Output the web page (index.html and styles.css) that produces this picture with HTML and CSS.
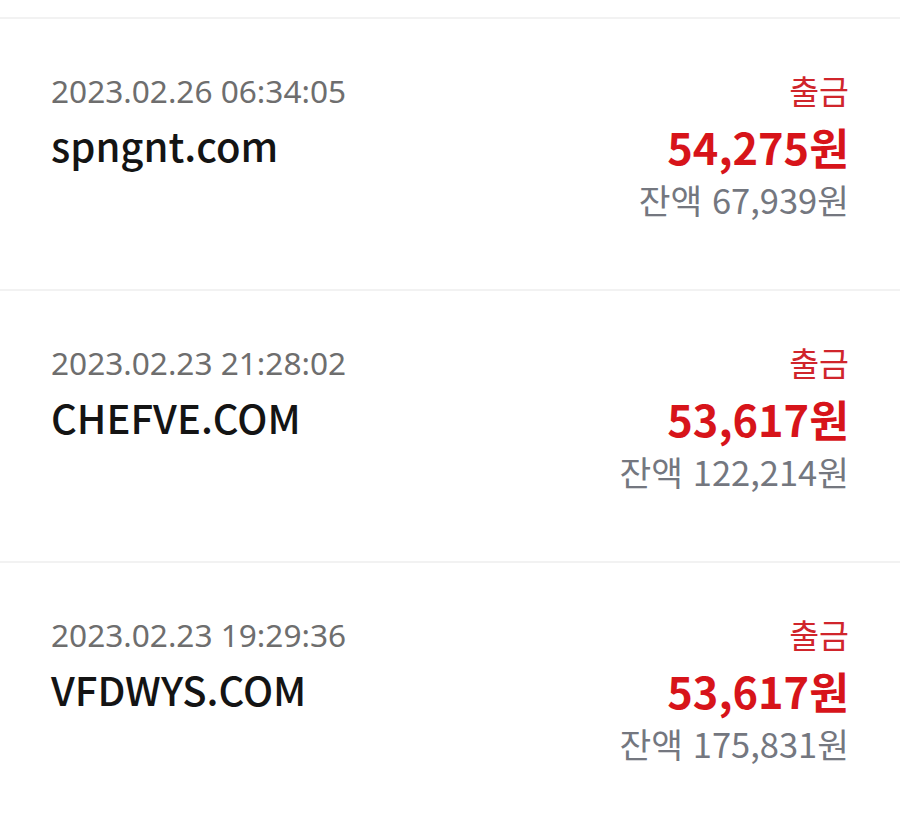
FILE: index.html
```html
<!DOCTYPE html>
<html lang="ko">

<head>
    <meta charset="UTF-8">
    <meta name="viewport" content="width=device-width, initial-scale=1.0">
    <title>거래내역</title>
    <link rel="stylesheet" href="styles.css">
</head>

<body>
    <!-- Transaction list -->
    <ul class="tx-list">
        <li class="tx-item">
            <div class="tx-info">
                <span class="tx-date">2023.02.26 06:34:05</span>
                <span class="tx-name">spngnt.com</span>
            </div>
            <div class="tx-amounts">
                <span class="tx-type">출금</span>
                <span class="tx-amount">54,275원</span>
                <span class="tx-balance">잔액 67,939원</span>
            </div>
        </li>
        <li class="tx-item">
            <div class="tx-info">
                <span class="tx-date">2023.02.23 21:28:02</span>
                <span class="tx-name">CHEFVE.COM</span>
            </div>
            <div class="tx-amounts">
                <span class="tx-type">출금</span>
                <span class="tx-amount">53,617원</span>
                <span class="tx-balance">잔액 122,214원</span>
            </div>
        </li>
        <li class="tx-item">
            <div class="tx-info">
                <span class="tx-date">2023.02.23 19:29:36</span>
                <span class="tx-name">VFDWYS.COM</span>
            </div>
            <div class="tx-amounts">
                <span class="tx-type">출금</span>
                <span class="tx-amount">53,617원</span>
                <span class="tx-balance">잔액 175,831원</span>
            </div>
        </li>
    </ul>
</body>

</html>
```

FILE: styles.css
```css
/* Base styling */
body {
    font-family: 'Noto Sans CJK KR', 'Noto Sans', sans-serif;
    margin: 0;
    padding: 0;
    background-color: #fff;
    color: #111;
}

/* List */
.tx-list {
    list-style: none;
    margin: 0;
    padding: 17px 0 0;
}

.tx-item {
    display: flex;
    justify-content: space-between;
    align-items: flex-start;
    height: 270px;
    padding: 0 51px 0 51px;
    border-top: 2px solid #f2f2f2;
}

/* Left column */
.tx-info {
    display: flex;
    flex-direction: column;
    padding-top: 50px;
}

.tx-date {
    font-family: 'Noto Sans', 'Noto Sans CJK KR', sans-serif;
    font-size: 31.6px;
    line-height: 44px;
    color: #6e6e6e;
}

.tx-name {
    font-size: 40px;
    line-height: 64px;
    font-weight: 500;
    color: #141414;
}

/* Right column */
.tx-amounts {
    display: flex;
    flex-direction: column;
    align-items: flex-end;
    padding-top: 48px;
}

.tx-type {
    font-size: 32.5px;
    line-height: 46px;
    color: #d0252b;
}

.tx-amount {
    font-size: 43.3px;
    line-height: 66px;
    font-weight: 700;
    color: #d7141a;
}

.tx-balance {
    font-size: 34.5px;
    line-height: 40px;
    color: #74777f;
}
```
